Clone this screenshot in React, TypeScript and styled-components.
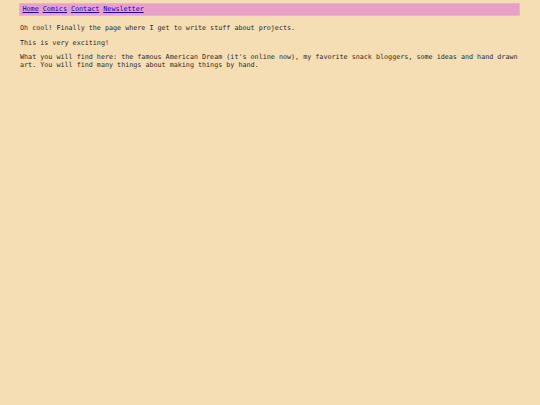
import React from "react";
import styled, { createGlobalStyle } from "styled-components";

const GlobalStyle = createGlobalStyle`
	html, body {
		margin: 0;
		background: #f5deb3;
	}
	body {
		font-family: "DejaVu Sans Mono", monospace;
		font-size: 6.72px;
		color: #2a2a2a;
	}
`;

const links = ["Home", "Comics", "Contact", "Newsletter"];

export default function App() {
	return (
		<>
			<GlobalStyle />
			<Page>
				<Nav>
					{links.map((l) => (
						<NavLink key={l} href="#">
							{l}
						</NavLink>
					))}
				</Nav>
				<Text>Oh cool! Finally the page where I get to write stuff about projects.</Text>
				<Text>This is very exciting!</Text>
				<Text>
					What you will find here: the famous American Dream (it's online now), my favorite snack bloggers, some ideas and hand drawn
					art. You will find many things about making things by hand.
				</Text>
			</Page>
		</>
	);
}

const Page = styled.div`
	padding: 3px 20px 0 19px;
	width: 501px;
`;

const Nav = styled.nav`
	display: flex;
	gap: 4px;
	align-items: center;
	height: 10.5px;
	padding: 0 2.5px;
	background: #e8a0c8;
	border: 0.5px solid #f0b0c8;
	margin-bottom: 9.5px;
`;

const NavLink = styled.a`
	color: #0000ee;
	text-decoration: underline;
`;

const Text = styled.p`
	margin: 0 0 7px 1px;
	line-height: 7.5px;
`;
